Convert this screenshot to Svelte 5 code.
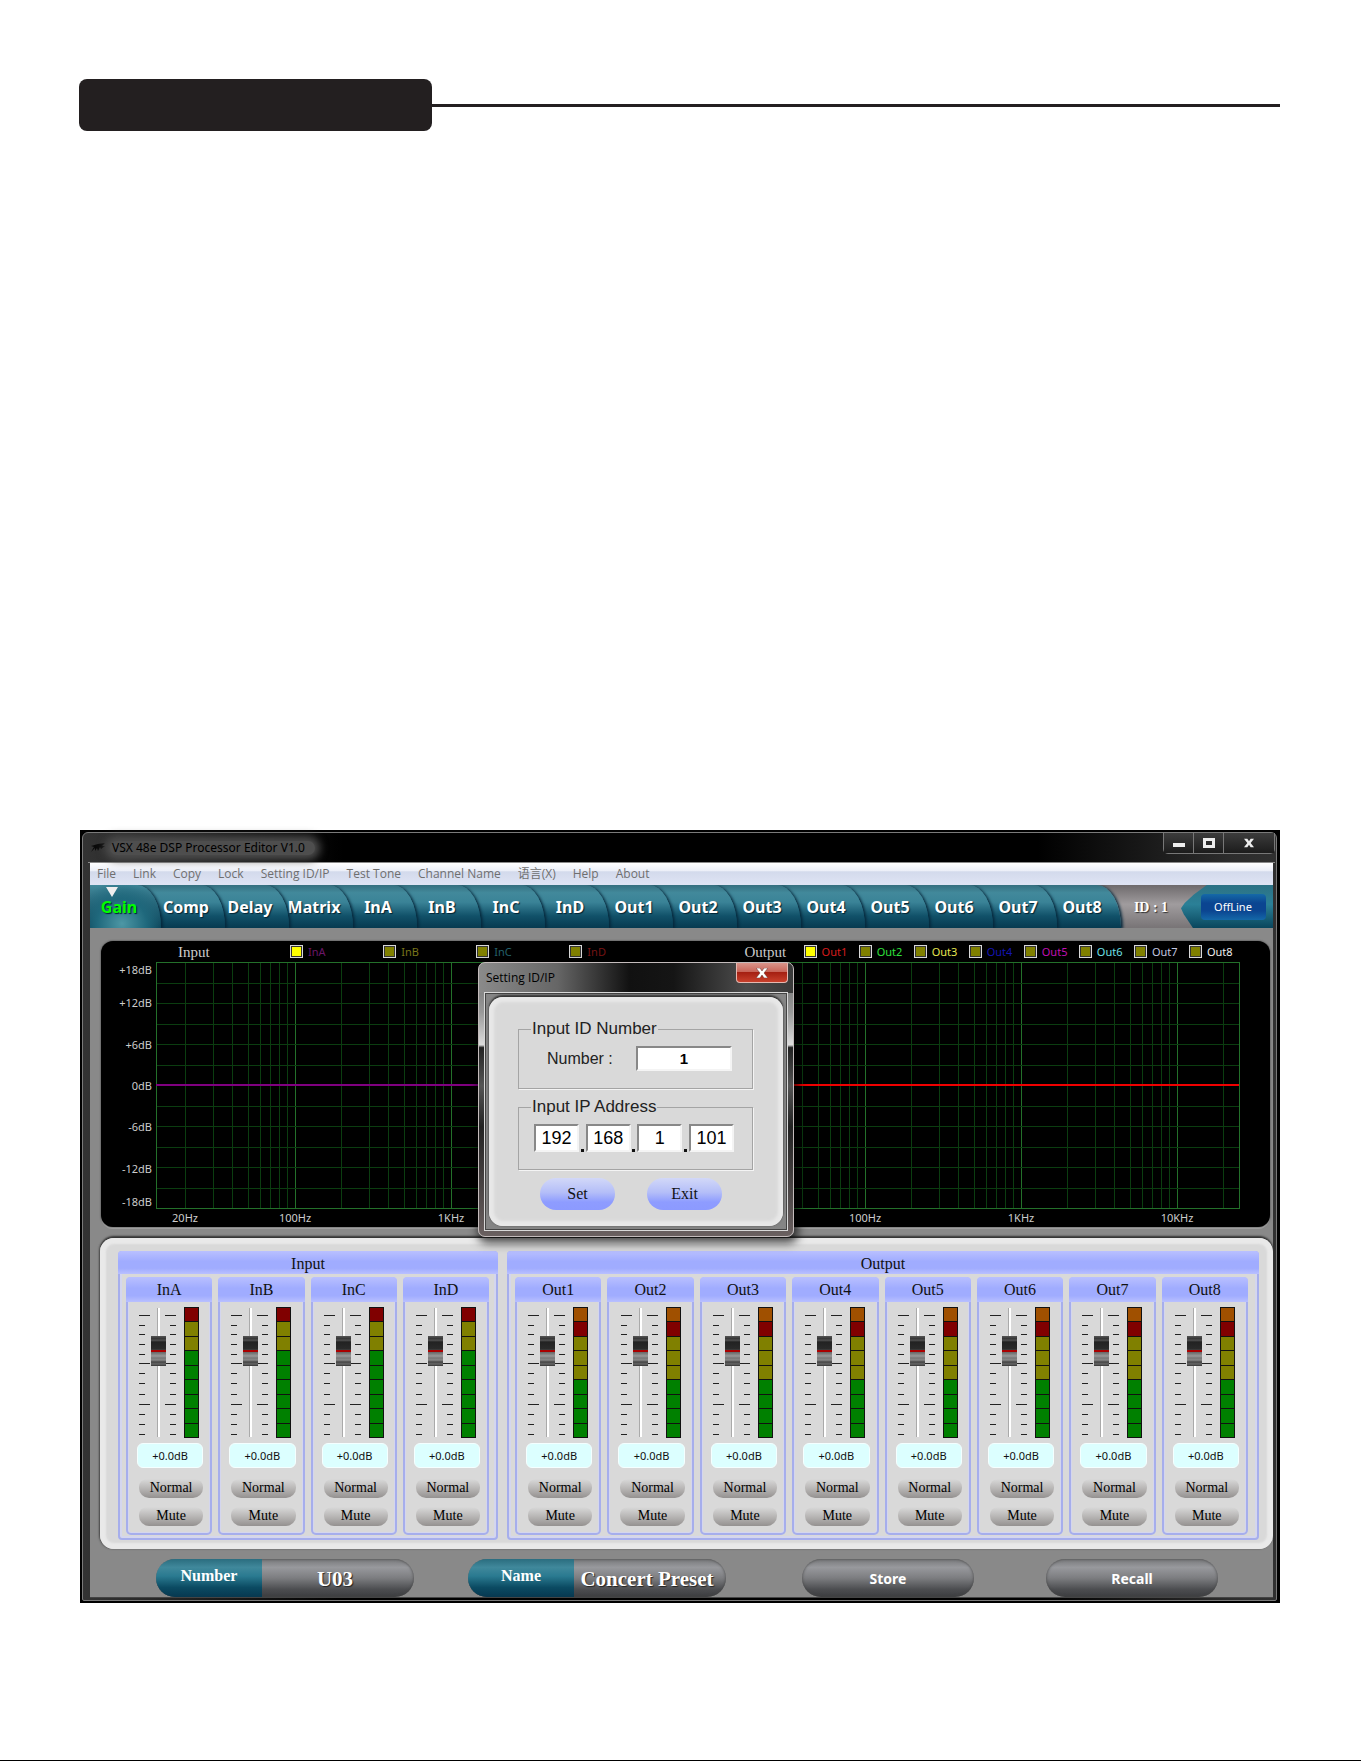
<script lang="ts">
  type Legend = { name: string; color: string; on?: boolean };

  const menus = ['File', 'Link', 'Copy', 'Lock', 'Setting ID/IP', 'Test Tone', 'Channel Name', '语言(X)', 'Help', 'About'];

  const ins = ['InA', 'InB', 'InC', 'InD'];
  const outs = ['Out1', 'Out2', 'Out3', 'Out4', 'Out5', 'Out6', 'Out7', 'Out8'];
  const tabs = ['Gain', 'Comp', 'Delay', 'Matrix', ...ins, ...outs];

  const inLegend: Legend[] = [
    { name: 'InA', color: '#6a1668', on: true },
    { name: 'InB', color: '#77741a' },
    { name: 'InC', color: '#24606c' },
    { name: 'InD', color: '#761414' },
  ];
  const outLegend: Legend[] = [
    { name: 'Out1', color: '#d81c1c', on: true },
    { name: 'Out2', color: '#2fe03c' },
    { name: 'Out3', color: '#e6e650' },
    { name: 'Out4', color: '#1414b4' },
    { name: 'Out5', color: '#c010b4' },
    { name: 'Out6', color: '#6fe0e8' },
    { name: 'Out7', color: '#c4c8e0' },
    { name: 'Out8', color: '#f0f0f0' },
  ];

  const levels = ['+18dB', '+12dB', '+6dB', '0dB', '-6dB', '-12dB', '-18dB'];

  // plot geometry: two log scales side by side, in units of a 1083 wide plot
  const PLOT_W = 1083;
  const PLOT_H = 246;
  const DECADE = 156;
  const pct = (x: number) => `${(x / PLOT_W) * 100}%`;

  function scale(at100: number) {
    const lines: { x: string; major: boolean }[] = [];
    for (const base of [10, 100, 1000, 10000]) {
      for (let m = 1; m < 10; m++) {
        const f = base * m;
        if (f < 20 || f > 20000) continue;
        lines.push({
          x: pct(at100 + Math.log10(f / 100) * DECADE),
          major: m === 1,
        });
      }
    }
    return lines;
  }

  const verticals = [...scale(139), ...scale(709)];
  const rows = Array.from({ length: 11 }, (_, i) => Math.round((i + 1) * PLOT_H / 12));
  const freqs = [
    { x: 29, label: '20Hz' },
    { x: 139, label: '100Hz' },
    { x: 295, label: '1KHz' },
    { x: 709, label: '100Hz' },
    { x: 865, label: '1KHz' },
    { x: 1021, label: '10KHz' },
  ];

  const ticks = [8, 18, 27, 37, 47, 56, 66, 76, 87, 97, 107, 117, 127];
  const longTicks = [8, 56, 97];

  const groups = [
    { title: 'Input', kind: 'in', channels: ins, meter: 'ryygggggg' },
    { title: 'Output', kind: 'out', channels: outs, meter: 'oryyygggg' },
  ];

  let tab = $state('Gain');
  let id = $state('1');
  let ip = $state(['192', '168', '1', '101']);
</script>

{#snippet legendItem(item: Legend)}
  <label class="legend-item" style="color: {item.color}">
    <input type="checkbox" checked={item.on} />
    <span>{item.name}</span>
  </label>
{/snippet}

<main>
  <div class="chapter">
    <div class="chapter-tab"></div>
    <div class="chapter-line"></div>
  </div>

  <section class="window">
    <div class="frame">
      <header class="titlebar">
        <svg class="logo" viewBox="0 0 16 12" width="16" height="12">
          <path d="M1 4 L8 2 L15 1 L12 4 L15 4 L11 7 L10 5 L8 9 L7 6 L5 9 L5 6 L1 10 L4 5 Z" fill="#0a0a0a" />
        </svg>
        <h1>VSX 48e DSP Processor Editor V1.0</h1>
        <div class="caption">
          <button aria-label="Minimize">
            <svg viewBox="0 0 12 10" width="12" height="10"><rect x="0" y="5" width="12" height="4" fill="#eee" /></svg>
          </button>
          <button aria-label="Maximize">
            <svg viewBox="0 0 12 10" width="12" height="10"><path d="M0 0H12V10H0ZM3 3V7H9V3Z" fill="#eee" fill-rule="evenodd" /></svg>
          </button>
          <button class="wide" aria-label="Close">
            <svg viewBox="0 0 12 10" width="10" height="10"><path d="M0 0H4L6 3L8 0H12L8 5L12 10H8L6 7L4 10H0L4 5Z" fill="#eee" /></svg>
          </button>
        </div>
      </header>

      <div class="client">
        <nav class="menu">
          {#each menus as item}
            <button>{item}</button>
          {/each}
        </nav>

        <div class="tabbar">
          <div class="tabs">
            {#each tabs as name, i}
              <button
                class="tab"
                class:active={tab === name}
                style="z-index: {tabs.length - i}"
                onclick={() => (tab = name)}
              >{name}</button>
            {/each}
          </div>
          <div class="device">ID : 1</div>
          <div class="link">
            <button>OffLine</button>
          </div>
        </div>

        <div class="chart">
          <div class="legend">
            <span class="caption-text">Input</span>
            {#each inLegend as item}
              {@render legendItem(item)}
            {/each}
            <span></span>
            <span class="caption-text">Output</span>
            {#each outLegend as item}
              {@render legendItem(item)}
            {/each}
          </div>
          <div class="plot">
            <div class="levels">
              {#each levels as level}
                <span>{level}</span>
              {/each}
            </div>
            <svg width="100%" height="266">
              {#each verticals as line}
                <line x1={line.x} x2={line.x} y1="0" y2={PLOT_H} class:major={line.major} />
              {/each}
              {#each rows as y}
                <line x1="0" x2="100%" y1={y} y2={y} />
              {/each}
              <rect x="0" y="0" width="100%" height={PLOT_H} />
              <line class="curve in" x1="0" x2="50%" y1="123" y2="123" />
              <line class="curve out" x1="50%" x2="100%" y1="123" y2="123" />
              {#each freqs as f}
                <text x={pct(f.x)} y="260">{f.label}</text>
              {/each}
            </svg>
          </div>
        </div>

        <div class="mixer">
          {#each groups as group}
            <section class="group {group.kind}">
              <h2>{group.title}</h2>
              <div class="channels">
                {#each group.channels as name}
                  <div class="channel">
                    <h3>{name}</h3>
                    <div class="strip">
                      <div class="levelling">
                        <div class="fader">
                          <svg viewBox="0 0 37 131" width="37" height="131">
                            {#each ticks as y}
                              {@const w = longTicks.includes(y) ? 11 : 6}
                              <rect x="0" {y} width={w} height="1" />
                              <rect x={37 - w} {y} width={w} height="1" />
                            {/each}
                          </svg>
                          <input type="range" min="-30" max="12" step="0.1" value="0" aria-label="{name} gain" />
                        </div>
                        <div class="meter">
                          {#each group.meter as seg}
                            <i class={seg}></i>
                          {/each}
                        </div>
                      </div>
                      <output>+0.0dB</output>
                      <button>Normal</button>
                      <button>Mute</button>
                    </div>
                  </div>
                {/each}
              </div>
            </section>
          {/each}
        </div>

        <footer>
          <div class="pill">
            <button class="key">Number</button>
            <span class="val">U03</span>
          </div>
          <div class="pill">
            <button class="key">Name</button>
            <span class="val">Concert Preset</span>
          </div>
          <button class="action">Store</button>
          <button class="action">Recall</button>
        </footer>
      </div>
    </div>

    <div class="dialog" role="dialog" aria-label="Setting ID/IP">
      <div class="dialog-title">
        <span>Setting ID/IP</span>
        <button aria-label="Close dialog">
          <svg viewBox="0 0 12 10" width="12" height="10"><path d="M0 0H4L6 3L8 0H12L8 5L12 10H8L6 7L4 10H0L4 5Z" fill="#fff" stroke="#5a2a26" stroke-width="0.5" /></svg>
        </button>
      </div>
      <div class="dialog-body">
        <form onsubmit={(e) => e.preventDefault()}>
          <fieldset>
            <legend>Input ID Number</legend>
            <div class="id-row">
              <label for="device-id">Number :</label>
              <input id="device-id" bind:value={id} />
            </div>
          </fieldset>
          <fieldset>
            <legend>Input IP Address</legend>
            <div class="ip-row">
              {#each ip as _, i}
                {#if i > 0}<b></b>{/if}
                <input aria-label="IP part {i + 1}" bind:value={ip[i]} />
              {/each}
            </div>
          </fieldset>
          <div class="buttons">
            <button>Set</button>
            <button type="button">Exit</button>
          </div>
        </form>
      </div>
    </div>
  </section>
</main>

<style>
  :global(body) {
    background: #fff;
  }

  main {
    padding: 79px 81px 157px 79px;
    border-bottom: 1px solid #000;
    font-family: "Noto Sans", "Noto Sans CJK SC", sans-serif;
  }

  button {
    margin: 0;
    padding: 0;
    border: none;
    background: none;
    font: inherit;
    color: inherit;
  }

  h1, h2, h3 {
    margin: 0;
    font-weight: 400;
  }

  /* page heading */
  .chapter {
    display: flex;
    align-items: center;
    margin-bottom: 699px;
  }

  .chapter-tab {
    width: 353px;
    height: 52px;
    border-radius: 8px;
    background: #231f20;
  }

  .chapter-line {
    flex: 1;
    height: 3px;
    background: #231f20;
  }

  /* window frame */
  .window {
    position: relative;
    margin-left: 1px;
    padding: 2px 3px 2px 2px;
    background: #000;
  }

  .frame {
    padding: 0 3px 2px 7px;
    border: 1px solid #7a7a7a;
    border-radius: 6px 6px 2px 2px;
    background: linear-gradient(90deg, #333 0, #2a2a2a 60px, #000 260px, #000 80%, #2c2c2c 96%, #303030);
  }

  .titlebar {
    display: flex;
    align-items: center;
    height: 30px;
    margin: 0 -2px;
    padding: 0 0 0 2px;
    border-bottom: 1px solid #8a8a8a;
    box-sizing: border-box;
  }

  .logo {
    margin-right: 4px;
  }

  h1 {
    padding: 0 10px 0 2px;
    border-radius: 12px;
    background: #4e4e4e;
    box-shadow: 0 0 8px 5px #4e4e4e;
    color: #000;
    font: 12px/14px "Noto Sans", sans-serif;
  }

  .caption {
    display: flex;
    align-self: flex-start;
    margin-left: auto;
    border: 1px solid #777;
    border-top: none;
    border-radius: 0 0 5px 5px;
  }

  .caption button {
    display: flex;
    align-items: center;
    justify-content: center;
    width: 30px;
    height: 20px;
    border-right: 1px solid #777;
    background: linear-gradient(#3c3c3c, #1c1c1c);
  }

  .caption button.wide {
    width: 50px;
    border-right: none;
  }

  .client {
    background: #898989;
  }

  .menu {
    display: flex;
    gap: 17px;
    height: 22px;
    padding-left: 7px;
    background: linear-gradient(#fff, #eceff8 35%, #d3daec 40%, #dfe4f4);
    color: #6f6f6f;
    font: 12px/22px "Open Sans", "Noto Sans CJK SC", sans-serif;
  }

  /* tabs */
  .tabbar {
    display: flex;
    height: 43px;
    background: linear-gradient(#6e6a6c, #a09c9e 45%, #787476);
  }

  .tabs {
    display: flex;
    flex: 1;
  }

  .tab {
    position: relative;
    flex: 1;
    margin-left: -24px;
    padding-left: 10px;
    border-radius: 0 24px 0 0 / 0 42px 0 0;
    background: linear-gradient(#356f7f, #42899b 18%, #3a8397 40%, #115169 72%, #073a50);
    box-shadow: 2px 1px 3px #06283c;
    color: #fff;
    font-size: 16px;
    font-weight: 700;
    text-shadow: 1px 1px 1px #023;
    clip-path: inset(0 -6px 0 0);
  }

  .tab:first-child {
    flex: 0 0 71px;
    margin-left: 0;
    padding: 0 13px 0 0;
  }

  .tab.active {
    color: #0f0;
    background: radial-gradient(ellipse at 45% 90%, #4d97a5, #1f687c 45%, transparent 80%), linear-gradient(#42899b, #073a50);
  }

  .tab.active::before {
    content: "";
    position: absolute;
    top: 2px;
    left: 16px;
    border: 6px solid transparent;
    border-top: 10px solid #eee;
    border-bottom: none;
  }

  .device {
    width: 60px;
    color: #fff;
    font: 700 14px/45px "Liberation Serif", serif;
    text-align: center;
    text-shadow: 1px 1px 1px #333;
  }

  .link {
    display: flex;
    align-items: center;
    justify-content: center;
    width: 92px;
    padding-left: 12px;
    box-sizing: border-box;
    background: linear-gradient(#2c7184, #2b8097 45%, #09465d);
    clip-path: polygon(28% 0, 100% 0, 100% 100%, 13% 100%, 3% 68%, 0 54%, 4% 42%, 14% 22%);
  }

  .link button {
    width: 65px;
    height: 26px;
    border-radius: 4px;
    background: linear-gradient(#1569a8, #0b4591 35%, #0b4591 65%, #1468a8);
    color: #fff;
    font-size: 11px;
  }

  /* response chart */
  .chart {
    margin: 13px 3px 11px 11px;
    border-radius: 12px;
    background: #000;
    box-shadow: 0 0 2px #333, 0 2px 0 #a5a5a5;
    height: 286px;
  }

  .legend {
    display: grid;
    grid-template-columns: 112fr repeat(4, 93fr) 82fr 59fr repeat(8, 55fr);
    align-items: center;
    height: 21px;
    padding: 0 26px 0 77px;
  }

  .legend > * {
    min-width: 0;
  }

  .caption-text {
    color: #ccc;
    font: 15px/20px "Liberation Serif", serif;
  }

  .legend-item {
    display: flex;
    align-items: center;
    gap: 5px;
    font-size: 11px;
    line-height: 16px;
  }

  .legend-item input {
    appearance: none;
    flex: none;
    width: 13px;
    height: 13px;
    margin: 0;
    border: 1px solid #d8d8d8;
    background: #808000;
    box-shadow: inset 0 0 0 1px #333;
  }

  .legend-item input:checked {
    background: #ff0;
  }

  .plot {
    display: grid;
    grid-template-columns: 51px 1fr;
    column-gap: 4px;
    padding-right: 31px;
  }

  .plot svg {
    display: block;
    overflow: visible;
  }

  .plot line {
    stroke: #0b3d10;
    shape-rendering: crispEdges;
  }

  .plot line.major {
    stroke: #23702a;
  }

  .plot rect {
    fill: none;
    stroke: #23702a;
    shape-rendering: crispEdges;
  }

  .plot line.curve {
    stroke: #800080;
    stroke-width: 2;
  }

  .plot line.curve.out {
    stroke: #f00000;
  }

  .plot text {
    fill: #ccc;
    font-size: 11px;
    text-anchor: middle;
  }

  .levels {
    display: grid;
    grid-template-rows: 1fr repeat(5, 2fr) 1fr;
    align-items: center;
    height: 248px;
    color: #ccc;
    font-size: 11px;
    line-height: 16px;
    text-align: right;
  }

  .levels span:first-child {
    align-self: start;
  }

  .levels span:last-child {
    align-self: end;
  }

  /* mixer */
  .mixer {
    display: flex;
    gap: 9px;
    margin-left: 10px;
    padding: 13px 14px 9px 18px;
    border-radius: 14px;
    background: #d9d9d9;
    box-shadow: 0 -2px 2px #333, -1px 0 2px #555, inset 0 0 2px 6px #e9e9e9;
  }

  .group {
    flex: 380;
    border-radius: 4px;
    box-shadow: inset 0 0 0 2px #a6aeec, inset 0 0 0 4px #d4d6ee;
    min-width: 0;
  }

  .group.out {
    flex: 752;
  }

  h2, h3 {
    color: #111;
    font: 16px/25px "Liberation Serif", serif;
    text-align: center;
    background: linear-gradient(#b9c0ff, #a0acff 45%, #a0acff 75%, #b9c0ff);
    border-radius: 4px 4px 0 0;
  }

  h2 {
    height: 23px;
  }

  .channels {
    display: flex;
    gap: 6px;
    padding: 3px 9px 5px 8px;
  }

  .out .channels {
    padding-right: 11px;
  }

  .channel {
    flex: 1;
    min-width: 0;
    border-radius: 5px;
    box-shadow: inset 0 0 0 2px #a6aeec, inset 0 0 0 3px #d4d6ee;
  }

  .strip {
    display: flex;
    flex-direction: column;
    padding: 5px 9px 9px 11px;
  }

  .levelling {
    display: flex;
    justify-content: center;
    gap: 8px;
    margin: 0 2px 5px 0;
  }

  .fader {
    position: relative;
    width: 37px;
    height: 131px;
  }

  .fader rect {
    fill: #222;
  }

  .fader input {
    position: absolute;
    top: 1px;
    left: 12px;
    width: 15px;
    height: 129px;
    margin: 0;
    appearance: none;
    writing-mode: vertical-lr;
    direction: rtl;
    background: linear-gradient(90deg, transparent 6px, #aaa 6px, #aaa 7px, #fff 7px, #fff 9px, transparent 9px);
  }

  .fader input::-webkit-slider-thumb {
    appearance: none;
    width: 15px;
    height: 30px;
    background: linear-gradient(#555 0, #333 3px, #555 4px, #222 6px, #2a2a2a 13px, #444 14px, #a00 14px, #a00 16px, #666 16px, #999 20px, #777 22px, #8a8a8a 24px, #444 26px, #666 28px, #333 30px);
  }

  .meter {
    display: flex;
    flex-direction: column;
    gap: 1px;
    width: 13px;
    padding: 1px;
    background: #111;
  }

  .meter i {
    flex: 1;
    background: #008000;
  }

  .meter i.y {
    background: #808000;
  }

  .meter i.r {
    background: #800000;
  }

  .meter i.o {
    background: #a05000;
  }

  output {
    height: 25px;
    margin-bottom: 11px;
    border: 1px solid #f4ffff;
    border-radius: 6px;
    box-sizing: border-box;
    background: #dcffff;
    color: #111;
    font-size: 11px;
    line-height: 23px;
    text-align: center;
  }

  .strip button {
    height: 19px;
    margin: 0 0 9px 2px;
    padding-bottom: 2px;
    border-radius: 8px 8px 10px 10px;
    background: linear-gradient(#d9d9d9, #b8b6b5 50%, #949190);
    color: #000;
    font: 14px/16px "Liberation Serif", serif;
  }

  .strip button:last-child {
    margin-bottom: 0;
  }

  /* preset bar */
  footer {
    display: grid;
    grid-template-columns: 312fr 334fr 244fr 172fr;
    padding: 10px 55px 0 66px;
    color: #fff;
    border-bottom: 1px solid #444;
  }

  .pill, .action {
    height: 38px;
    border-radius: 19px;
    background: linear-gradient(#77787a, #98999d 22%, #7c7d80 50%, #4c4d50 80%, #3c3d40);
    box-shadow: inset 0 0 3px #444;
    overflow: hidden;
  }

  .pill {
    display: flex;
    width: 258px;
    font: 700 21px/40px "Liberation Serif", serif;
    text-shadow: 1px 1px 1px #222;
  }

  .key {
    width: 106px;
    background: linear-gradient(#2b6d7f, #40889b 22%, #2a7a90 45%, #0b4a62 75%, #073850);
    font-size: 16px;
    line-height: 34px;
    padding-bottom: 4px;
  }

  .val {
    flex: 1;
    padding-right: 6px;
    text-align: center;
    white-space: nowrap;
  }

  .action {
    width: 172px;
    font-size: 14px;
    font-weight: 700;
  }

  /* ID/IP dialog */
  .dialog {
    position: absolute;
    top: 132px;
    left: 398px;
    width: 316px;
    padding: 0 5px 5px;
    border: 1px solid #c4bcbc;
    border-radius: 7px;
    box-sizing: border-box;
    background: linear-gradient(90deg, #8a8a8a, #666 25%, #111 48%, #151515 62%, #4c4c4c 85%, #3a3a3a) 0 0 / 100% 30px no-repeat,
      linear-gradient(#666, #999 18%, #ddd 30%, #222 31%, #555 45%, #222 60%, #6a6060);
    box-shadow: 2px 4px 10px 2px rgb(0 0 0 / 70%);
  }

  .dialog-title {
    display: flex;
    justify-content: space-between;
    height: 29px;
    padding-left: 2px;
    color: #000;
    font: 12px/29px "Open Sans", sans-serif;
  }

  .dialog-title button {
    display: flex;
    align-items: center;
    justify-content: center;
    width: 52px;
    height: 20px;
    border: 1px solid #e6b8b0;
    border-top: none;
    border-radius: 0 0 4px 4px;
    background: linear-gradient(#d8948a, #c8665a 45%, #a52012 50%, #c8402c);
  }

  .dialog-body {
    padding: 4px;
    border: 1px solid #d8d8d8;
    background: #858585;
    box-shadow: inset 0 0 0 1px #444;
  }

  form {
    padding: 22px 30px 16px 29px;
    border-radius: 14px;
    background: #d9d9d9;
    box-shadow: inset 0 0 3px 5px #e8e8e8, 0 -2px 2px #333, 0 0 2px #555;
    color: #222;
    font: 16px/20px "Liberation Sans", sans-serif;
  }

  fieldset {
    min-width: 0;
    margin: 0 0 8px;
    padding: 0 18px 0 12px;
    border: 1px solid #a4a4a4;
    box-shadow: 1px 1px 0 #f4f4f4;
  }

  legend {
    padding: 0 1px;
    font-size: 17px;
  }

  .id-row, .ip-row {
    display: flex;
    align-items: center;
    justify-content: space-between;
  }

  .id-row {
    height: 25px;
    padding: 7px 2px 17px 16px;
  }

  .ip-row {
    height: 28px;
    padding: 7px 0 17px 3px;
  }

  form input {
    width: 45px;
    height: 28px;
    padding: 0;
    border: 2px solid;
    border-color: #888 #f4f4f4 #f4f4f4 #888;
    box-sizing: border-box;
    background: #fff;
    color: #000;
    font: 18px/20px "Liberation Sans", sans-serif;
    text-align: center;
  }

  #device-id {
    width: 96px;
    height: 25px;
    font-size: 15px;
    font-weight: 700;
  }

  .ip-row b {
    align-self: flex-end;
    width: 3px;
    height: 3px;
    background: #111;
  }

  .buttons {
    display: flex;
    gap: 32px;
    padding-left: 22px;
  }

  .buttons button {
    width: 75px;
    height: 32px;
    border-radius: 16px;
    background: linear-gradient(#d2d8f8, #b4bef8 45%, #8e9cff 75%, #8c9aff);
    color: #111;
    font: 16px/32px "Liberation Serif", serif;
  }
</style>
